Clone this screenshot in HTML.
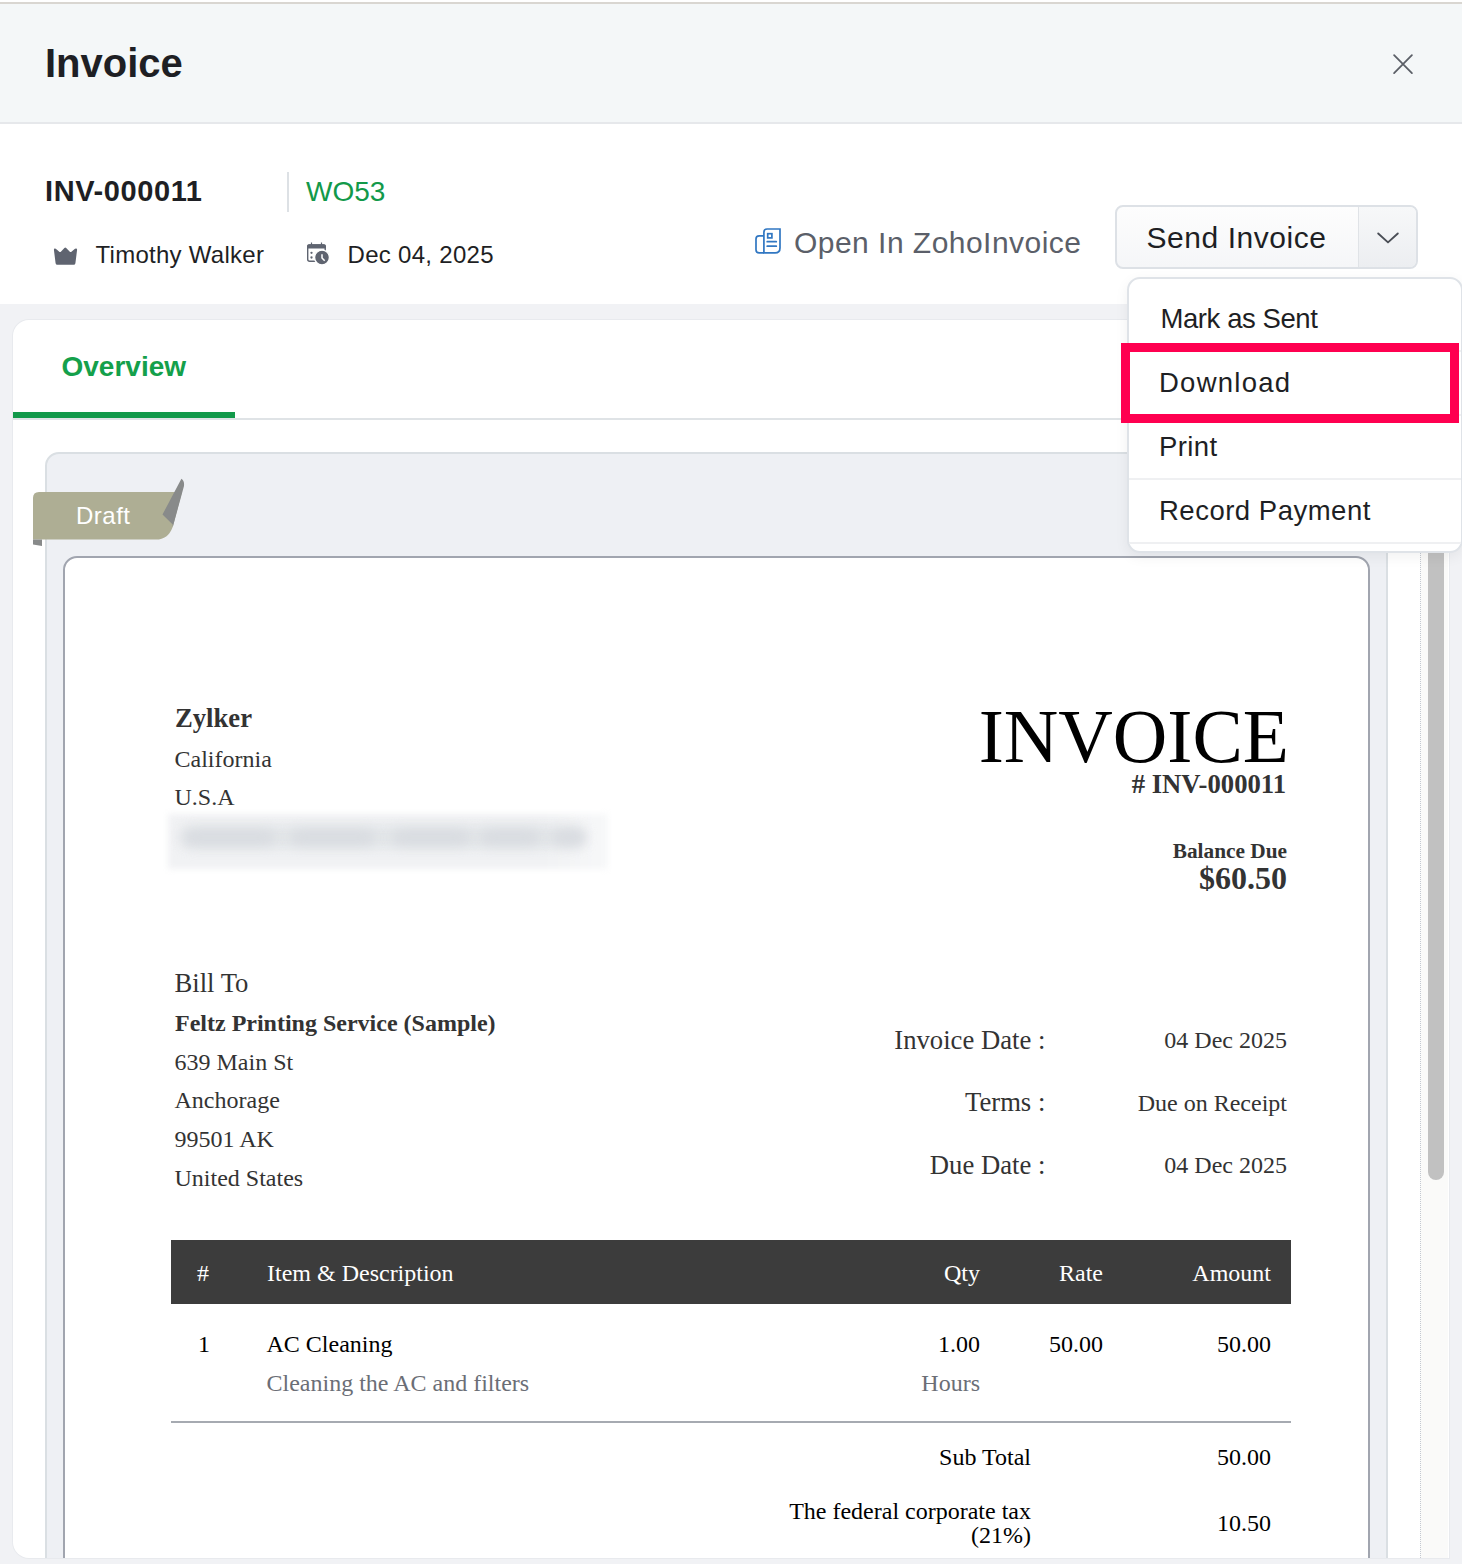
<!DOCTYPE html>
<html><head><meta charset="utf-8">
<style>
*{box-sizing:border-box;margin:0;padding:0}
html,body{width:1462px;height:1564px;overflow:hidden;background:#f1f2f5;font-family:"Liberation Sans",sans-serif}
.a{position:absolute;white-space:pre;line-height:1}
.s{font-family:"Liberation Serif",serif}
#topline{position:absolute;left:0;top:0;width:1462px;height:4px;background:#fff;border-bottom:2px solid #d9d6d1}
#hdr{position:absolute;left:0;top:4px;width:1462px;height:120px;background:#f4f7f8;border-bottom:2px solid #e6e8eb}
#info{position:absolute;left:0;top:124px;width:1462px;height:180px;background:#fff}
#card{position:absolute;left:13px;top:320px;width:1436px;height:1238px;background:#fff;border-radius:16px 16px 0 16px;overflow:hidden;box-shadow:0 0 0 1px #e8eaee}
#gbox{position:absolute;left:32px;top:132px;width:1343px;height:1300px;background:#eef0f4;border:2px solid #dadfe3;border-radius:14px}
#paper{position:absolute;left:16px;top:102px;width:1307px;height:1200px;background:#fff;border:2px solid #a1a5af;border-radius:14px}
#track{position:absolute;left:1407px;top:100px;width:28px;height:1200px;background:#fafaf9;border-left:1px dotted #c3c8d0}
#thumb{position:absolute;left:1415px;top:0;width:16px;height:860px;background:#c1c1c1;border-radius:0 0 8px 8px}
#dd{position:absolute;left:1127px;top:277px;width:336px;height:276px;background:#fff;border:2px solid #dfe3e8;border-radius:13px;box-shadow:0 4px 14px rgba(0,0,0,0.06)}
.sep{position:absolute;left:0;width:100%;height:2px;background:#eff0f2}
#red{position:absolute;left:1121px;top:343px;width:338px;height:80px;border:9px solid #ff0050}
</style></head><body>
<div id="topline"></div>
<div id="hdr"></div>
<div class="a" style="left:45px;top:43px;font-size:40px;font-weight:bold;color:#1e1f24">Invoice</div>
<svg style="position:absolute;left:1391px;top:52px" width="24" height="24" viewBox="0 0 24 24"><path d="M3.1 3.2L20.9 21.1M20.9 3.2L3.1 21.1" stroke="#5b5f67" stroke-width="1.8" stroke-linecap="round"/></svg>

<div id="info"></div>
<div class="a" style="left:45px;top:177.4px;font-size:29px;font-weight:bold;color:#1e1f24;letter-spacing:0.6px">INV-000011</div>
<div style="position:absolute;left:287px;top:172px;width:2px;height:40px;background:#dde1e5"></div>
<div class="a" style="left:306px;top:178.2px;font-size:28px;color:#12994a">WO53</div>
<svg style="position:absolute;left:53px;top:246px" width="25" height="19" viewBox="0 0 25 19"><path d="M0.9 3.8Q1 1.6 2.8 2.8L6 5.6Q7 6.6 8.1 5.6L11.4 1.9Q12.3 0.9 13.2 1.9L16.6 5.6Q17.6 6.6 18.7 5.6L22 2.8Q23.9 1.6 24.1 3.8L22.4 17.2Q22.1 18.7 20.7 18.7L4.3 18.7Q2.9 18.7 2.6 17.2Z" fill="#5f6470"/></svg>
<div class="a" style="left:95.5px;top:242.7px;font-size:24px;color:#1e1f24;letter-spacing:0.27px">Timothy Walker</div>
<svg style="position:absolute;left:300px;top:236px" width="40" height="36" viewBox="0 0 40 36"><path d="M11.5 6.4V9M21.5 6.4V9" stroke="#5f6470" stroke-width="1.2"/><rect x="7.7" y="8.9" width="17.5" height="16.3" rx="2" fill="none" stroke="#5f6470" stroke-width="1.4"/><path d="M7 12.6V10.2Q7 8.2 9 8.2H24Q26 8.2 26 10.2V12.6Z" fill="#5f6470"/><circle cx="11.5" cy="16.8" r="1.15" fill="#5f6470"/><circle cx="11.5" cy="21.5" r="1.15" fill="#5f6470"/><circle cx="22" cy="21.6" r="7.4" fill="#5f6470" stroke="#fff" stroke-width="1.3"/><path d="M22 18.2V21.9L24.7 24.8" fill="none" stroke="#fff" stroke-width="1.5"/></svg>
<div class="a" style="left:347.5px;top:242.7px;font-size:24px;color:#1e1f24;letter-spacing:0.3px">Dec 04, 2025</div>

<svg style="position:absolute;left:748px;top:222px" width="40" height="38" viewBox="0 0 40 38"><g fill="none" stroke="#3177c2" stroke-width="1.7"><path d="M15.9 30.9V10.2Q15.9 7 19.1 7H32V26Q32 30.9 27.1 30.9Z"/><path d="M15.9 13.9H11.2Q8 13.9 8 17.1V27.7Q8 30.9 11.2 30.9H15.9"/><rect x="19.7" y="11.7" width="4.2" height="4.2"/><path d="M19.2 19.7H28.3M19.2 24.2H28.3" stroke-linecap="round"/></g></svg>
<div class="a" style="left:794px;top:227.9px;font-size:30px;color:#5b5f69;letter-spacing:0.47px">Open In ZohoInvoice</div>

<div style="position:absolute;left:1114.5px;top:205px;width:303.5px;height:63.5px;border:2px solid #dde1e6;border-radius:8px;background:linear-gradient(#fdfdfd,#f5f6f8);overflow:hidden">
  <div style="position:absolute;left:241.5px;top:0;width:62px;height:100%;background:linear-gradient(#f7f8f9,#eceef1);border-left:1.5px solid #e0e3e7"></div>
</div>
<div class="a" style="left:1146.5px;top:223px;font-size:30px;color:#1e1f24;letter-spacing:0.55px">Send Invoice</div>
<svg style="position:absolute;left:1376px;top:230px" width="24" height="15" viewBox="0 0 24 15"><path d="M2.2 3.5L12 12.4L21.8 3.5" fill="none" stroke="#4a4e56" stroke-width="1.9" stroke-linecap="round" stroke-linejoin="round"/></svg>

<div id="card">
  <div class="a" style="left:48.5px;top:33px;font-size:28px;font-weight:bold;color:#14a04b">Overview</div>
  <div style="position:absolute;left:0;top:98px;width:1436px;height:2px;background:#dfe3e6"></div>
  <div style="position:absolute;left:0;top:92px;width:222px;height:6px;background:#12994a"></div>
  <div id="gbox">
    <div id="paper"></div>
  </div>
<div style="position:absolute;left:-13px;top:-320px;width:1462px;height:1564px">
<svg style="position:absolute;left:0;top:0" width="200" height="560" viewBox="0 0 200 560">
<path d="M33 498Q33 492 39 492L182 492L172.7 527Q168 539.6 156 539.6L33 539.6Z" fill="#aeae94"/>
<path d="M181.4 478.7Q184.5 480.5 184 486L172.7 527.3L172.7 524.5L162.5 514.5Z" fill="#888a8a"/>
<path d="M33 539.6L42 539.6L42 546L33 544.5Z" fill="#888a8a"/>
</svg>
<div class="a" style="left:76px;top:503.6px;font-size:24px;color:#fff;letter-spacing:0.5px">Draft</div>
<div class="a s" style="left:175px;top:704.5px;font-size:26.67px;font-weight:bold;color:#333">Zylker</div>
<div class="a s" style="left:174.5px;top:746.5px;font-size:24px;color:#333">California</div>
<div class="a s" style="left:174.5px;top:784.8px;font-size:24px;color:#333">U.S.A</div>
<div style="position:absolute;left:168px;top:814px;width:440px;height:55px;background:linear-gradient(90deg,#f1f2f4 0%,#f1f2f4 85%,#f7f8f9 100%);filter:blur(3px)"></div>
<div style="position:absolute;left:180px;top:826px;width:405px;height:22px;background:#e2e5e8;border-radius:11px;filter:blur(6px)"></div>
<div style="position:absolute;left:184px;top:830px;width:91px;height:15px;background:#d8dbe0;border-radius:8px;filter:blur(6px)"></div>
<div style="position:absolute;left:290px;top:830px;width:85px;height:15px;background:#d8dbe0;border-radius:8px;filter:blur(6px)"></div>
<div style="position:absolute;left:392px;top:830px;width:78px;height:15px;background:#d8dbe0;border-radius:8px;filter:blur(6px)"></div>
<div style="position:absolute;left:480px;top:830px;width:60px;height:15px;background:#d8dbe0;border-radius:8px;filter:blur(6px)"></div>
<div style="position:absolute;left:552px;top:830px;width:33px;height:15px;background:#d8dbe0;border-radius:8px;filter:blur(6px)"></div>
<div class="a s" style="right:173px;top:698.8px;font-size:75.5px;color:#000">INVOICE</div>
<div class="a s" style="right:176px;top:770.9px;font-size:26.67px;font-weight:bold;color:#333"># INV-000011</div>
<div class="a s" style="right:175px;top:841.2px;font-size:21.33px;font-weight:bold;color:#333">Balance Due</div>
<div class="a s" style="right:175px;top:862.4px;font-size:32px;font-weight:bold;color:#333">$60.50</div>
<div class="a s" style="left:174.5px;top:970.4px;font-size:26.67px;color:#333">Bill To</div>
<div class="a s" style="left:175px;top:1010.9px;font-size:24px;font-weight:bold;color:#333">Feltz Printing Service (Sample)</div>
<div class="a s" style="left:174.5px;top:1049.6px;font-size:24px;color:#333">639 Main St</div>
<div class="a s" style="left:174.5px;top:1088.3px;font-size:24px;color:#333">Anchorage</div>
<div class="a s" style="left:174.5px;top:1126.9px;font-size:24px;color:#333">99501 AK</div>
<div class="a s" style="left:174.5px;top:1165.6px;font-size:24px;color:#333">United States</div>
<div class="a s" style="right:416.70000000000005px;top:1026.6px;font-size:26.67px;color:#333">Invoice Date :</div>
<div class="a s" style="right:175px;top:1027.9px;font-size:24px;color:#333">04 Dec 2025</div>
<div class="a s" style="right:416.70000000000005px;top:1089.2px;font-size:26.67px;color:#333">Terms :</div>
<div class="a s" style="right:175px;top:1090.5px;font-size:24px;color:#333">Due on Receipt</div>
<div class="a s" style="right:416.70000000000005px;top:1151.8px;font-size:26.67px;color:#333">Due Date :</div>
<div class="a s" style="right:175px;top:1153.1px;font-size:24px;color:#333">04 Dec 2025</div>
<div style="position:absolute;left:171px;top:1240px;width:1120px;height:64px;background:#3c3c3c"></div>
<div class="a s" style="left:197px;top:1260.9px;font-size:24px;color:#fff">#</div>
<div class="a s" style="left:267px;top:1260.9px;font-size:24px;color:#fff">Item &amp; Description</div>
<div class="a s" style="right:482px;top:1260.9px;font-size:24px;color:#fff">Qty</div>
<div class="a s" style="right:359px;top:1260.9px;font-size:24px;color:#fff">Rate</div>
<div class="a s" style="right:191px;top:1260.9px;font-size:24px;color:#fff">Amount</div>
<div class="a s" style="left:198px;top:1331.6px;font-size:24px;color:#000">1</div>
<div class="a s" style="left:266.5px;top:1331.6px;font-size:24px;color:#000">AC Cleaning</div>
<div class="a s" style="right:482px;top:1331.6px;font-size:24px;color:#000">1.00</div>
<div class="a s" style="right:359px;top:1331.6px;font-size:24px;color:#000">50.00</div>
<div class="a s" style="right:191px;top:1331.6px;font-size:24px;color:#000">50.00</div>
<div class="a s" style="left:266.5px;top:1370.9px;font-size:24px;color:#6b6e76">Cleaning the AC and filters</div>
<div class="a s" style="right:482px;top:1370.9px;font-size:24px;color:#6b6e76">Hours</div>
<div style="position:absolute;left:171px;top:1421px;width:1120px;height:2px;background:#a6aab1"></div>
<div class="a s" style="right:431px;top:1445.4px;font-size:24px;color:#000">Sub Total</div>
<div class="a s" style="right:191px;top:1445.4px;font-size:24px;color:#000">50.00</div>
<div class="a s" style="right:431px;top:1499.4px;font-size:24px;color:#000">The federal corporate tax</div>
<div class="a s" style="right:431px;top:1523.4px;font-size:24px;color:#000">(21%)</div>
<div class="a s" style="right:191px;top:1511.4px;font-size:24px;color:#000">10.50</div>
</div>
  <div id="track"><div style="position:absolute;left:7px;top:0;width:16px;height:760px;background:#c1c1c1;border-radius:0 0 8px 8px"></div></div>
</div>

<div id="dd">
  <div class="sep" style="top:71px"></div>
  <div class="sep" style="top:135px"></div>
  <div class="sep" style="top:199px"></div>
  <div class="sep" style="top:263px"></div>
</div>
<div class="a" style="left:1160.5px;top:304.7px;font-size:27.5px;color:#1e1f24;letter-spacing:-0.42px">Mark as Sent</div>
<div class="a" style="left:1159px;top:369px;font-size:27.5px;color:#1e1f24;letter-spacing:1.25px">Download</div>
<div class="a" style="left:1159px;top:432.7px;font-size:27.5px;color:#1e1f24;letter-spacing:0.4px">Print</div>
<div class="a" style="left:1159px;top:496.5px;font-size:27.5px;color:#1e1f24;letter-spacing:0.5px">Record Payment</div>
<div id="red"></div>

</body></html>
